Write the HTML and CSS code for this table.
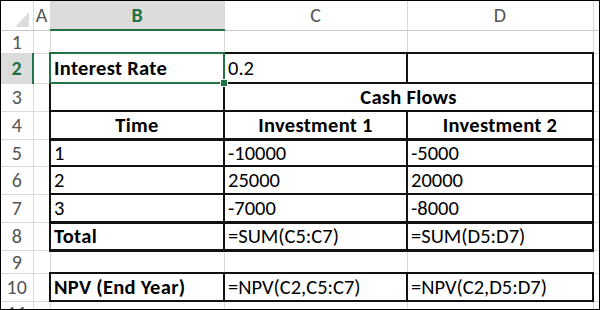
FILE: index.html
```html
<!DOCTYPE html>
<html>
<head>
<meta charset="utf-8">
<link rel="stylesheet" href="styles.css">
</head>
<body>
<table class="sheet">
  <colgroup>
    <col class="c-rh"><col class="c-a"><col class="c-b"><col class="c-c"><col class="c-d"><col class="c-e">
  </colgroup>
  <tr class="r-head">
    <th class="corner"><svg class="tri" width="32" height="28" viewBox="0 0 32 28"><polygon points="14,26 28,26 28,11" fill="#dcdcdc"/></svg></th>
    <th class="colh">A</th>
    <th class="colh colh-sel">B</th>
    <th class="colh">C</th>
    <th class="colh">D</th>
    <th class="colh"></th>
  </tr>
  <tr class="r1">
    <th class="rowh">1</th><td></td><td></td><td></td><td></td><td></td>
  </tr>
  <tr class="r2">
    <th class="rowh rowh-sel">2</th><td></td>
    <td class="box bold sel">Interest Rate<span class="handle"></span></td>
    <td class="box">0.2</td>
    <td class="box"></td><td></td>
  </tr>
  <tr class="r3">
    <th class="rowh">3</th><td></td>
    <td class="box"></td>
    <td class="box bold center" colspan="2">Cash Flows</td>
    <td></td>
  </tr>
  <tr class="r4">
    <th class="rowh">4</th><td></td>
    <td class="box bold center">Time</td>
    <td class="box bold center">Investment 1</td>
    <td class="box bold center">Investment 2</td>
    <td></td>
  </tr>
  <tr class="r5">
    <th class="rowh">5</th><td></td>
    <td class="box">1</td><td class="box">-10000</td><td class="box">-5000</td><td></td>
  </tr>
  <tr class="r6">
    <th class="rowh">6</th><td></td>
    <td class="box">2</td><td class="box">25000</td><td class="box">20000</td><td></td>
  </tr>
  <tr class="r7">
    <th class="rowh">7</th><td></td>
    <td class="box">3</td><td class="box">-7000</td><td class="box">-8000</td><td></td>
  </tr>
  <tr class="r8">
    <th class="rowh">8</th><td></td>
    <td class="box bold">Total</td><td class="box">=SUM(C5:C7)</td><td class="box">=SUM(D5:D7)</td><td></td>
  </tr>
  <tr class="r9">
    <th class="rowh">9</th><td></td><td></td><td></td><td></td><td></td>
  </tr>
  <tr class="r10">
    <th class="rowh">10</th><td></td>
    <td class="box bold">NPV (End Year)</td><td class="box">=NPV(C2,C5:C7)</td><td class="box">=NPV(C2,D5:D7)</td><td></td>
  </tr>
  <tr class="r11">
    <th class="rowh"><span class="cut">11</span></th><td></td><td></td><td></td><td></td><td></td>
  </tr>
</table>
</body>
</html>
```

FILE: styles.css
```css
html, body {
  margin: 0;
  padding: 0;
}
body {
  width: 600px;
  height: 310px;
  box-sizing: border-box;
  border: 1px solid #000;
  overflow: hidden;
  background: #fff;
  font-family: Carlito, Lato, "Noto Sans", sans-serif;
  color: #000;
}
.sheet {
  border-collapse: collapse;
  table-layout: fixed;
  width: 598px;
}
.c-rh { width: 32px; }
.c-a { width: 17px; }
.c-b { width: 174px; }
.c-c { width: 183px; }
.c-d { width: 186px; }
.c-e { width: 6px; }

.sheet td, .sheet th {
  border: 1px solid #dadada;
  padding: 0 3px;
  white-space: nowrap;
  overflow: hidden;
  font-size: 20.5px;
  font-weight: normal;
  text-align: left;
  vertical-align: middle;
  line-height: 22px;
}
.sheet tr > :first-child { border-left: 0; }
.sheet .r-head > * { border-top: 0; }

.r-head { height: 29px; }
.r1 { height: 23px; }
.r2 { height: 30px; }
.r3 { height: 28px; }
.r4 { height: 28px; }
.r5 { height: 27px; }
.r6 { height: 28px; }
.r7 { height: 28px; }
.r8 { height: 28px; }
.r9 { height: 22px; }
.r10 { height: 28px; }
.r11 { height: 10px; }

.sheet .corner {
  padding: 0;
  border-bottom-color: #c8c8c8;
}
.tri { display: block; }
.sheet .colh {
  text-align: center;
  color: #555;
  font-size: 20px;
  padding: 0;
  border-bottom-color: #c8c8c8;
}
.sheet .colh-sel {
  background: #dcdcdc;
  color: #217346;
  font-weight: bold;
  border-bottom: 2px solid #217346;
}
.sheet .rowh {
  text-align: center;
  color: #555;
  font-size: 20px;
  padding: 0;
}
.sheet .rowh-sel {
  background: #dcdcdc;
  color: #217346;
  font-weight: bold;
  border-right: 2px solid #217346;
}
.sheet .box {
  border: 2px solid #111;
}
.sheet .bold {
  font-weight: bold;
  letter-spacing: 0.3px;
}
.sheet .center { text-align: center; }
.sheet .sel {
  border: 2px solid #217346;
  position: relative;
  overflow: visible;
}
.handle {
  position: absolute;
  right: -5px;
  bottom: -5px;
  width: 6px;
  height: 6px;
  background: #217346;
  border: 1px solid #fff;
  z-index: 2;
}
.sheet .r4 .box { border-bottom-width: 3px; }
.sheet .r8 .box { border-top-width: 3px; border-bottom-width: 3px; }
.sheet .r11 .rowh {
  vertical-align: top;
  line-height: 10px;
  height: 8px;
}
.cut {
  display: block;
  height: 8px;
  overflow: hidden;
  line-height: 22px;
  font-size: 20px;
}
```
